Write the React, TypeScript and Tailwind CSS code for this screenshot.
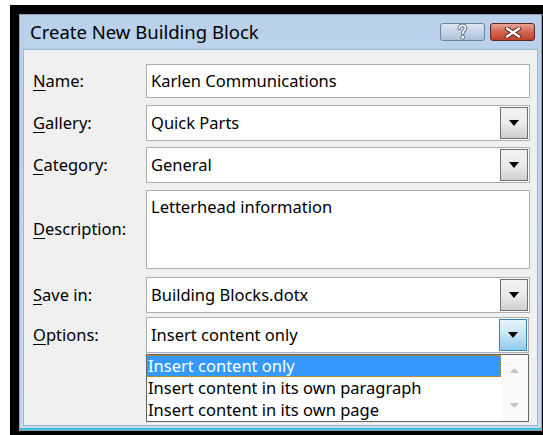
import React from 'react'

const font = "font-['Noto_Sans',sans-serif]"

function Key({ label, k }: { label: string; k: number }) {
  return (
    <span>
      {label.slice(0, k)}
      <span className="underline underline-offset-[3px]">{label[k]}</span>
      {label.slice(k + 1)}
    </span>
  )
}

function Arrow({ active }: { active?: boolean }) {
  return (
    <div
      className={`flex w-[28px] shrink-0 items-center justify-center border ${
        active
          ? 'border-[#3c7fb1] bg-gradient-to-b from-[#e5f4fc] via-[#c4e5f6] to-[#8ecbee]'
          : 'border-[#707070] bg-gradient-to-b from-[#f2f2f2] via-[#ebebeb] to-[#cfcfcf]'
      }`}
    >
      <svg width="10" height="6" viewBox="0 0 10 6">
        <path d="M0 0h10L5 6z" fill="#000" />
      </svg>
    </div>
  )
}

function TextBox({ value }: { value: string }) {
  return (
    <div className="flex h-[34px] items-center border border-[#abadb3] bg-white px-[4px] text-[16.5px] text-black">
      {value}
    </div>
  )
}

function Combo({ value, active, w = '' }: { value: string; active?: boolean; w?: string }) {
  return (
    <div className={`flex h-[36px] border border-[#abadb3] bg-white p-[1px] text-[16.5px] text-black ${w}`}>
      <div className="flex flex-1 items-center px-[3px]">{value}</div>
      <Arrow active={active} />
    </div>
  )
}

function Row({ label, k, children, className = '' }: { label: string; k: number; children: React.ReactNode; className?: string }) {
  return (
    <div className={`grid grid-cols-[113px_384px] items-center ${className}`}>
      <div className="text-[16.5px] text-black">
        <Key label={label} k={k} />
      </div>
      {children}
    </div>
  )
}

function CaptionButtons() {
  const q = 'M2.2 4.6C2.2 2.2 3.6 1.4 5.4 1.4S8.6 2.3 8.6 4.2C8.6 6.2 5.7 6.6 5.7 9.3'
  return (
    <div className="flex items-center gap-[5px]">
      <div className="flex h-[18px] w-[45px] items-center justify-center rounded-[3px] border border-[#6f8299] bg-gradient-to-b from-[#dfe8f2] via-[#c5d5e7] to-[#a9bfd8]">
        <svg width="11" height="16" viewBox="0 0 11 16">
          <path d={q} fill="none" stroke="#56687c" strokeWidth="3.6" strokeLinecap="round" />
          <path d={q} fill="none" stroke="#fff" strokeWidth="1.8" strokeLinecap="round" />
          <circle cx="5.7" cy="13.3" r="1.9" fill="#fff" stroke="#56687c" strokeWidth="0.9" />
        </svg>
      </div>
      <div className="flex h-[18px] w-[45px] items-center justify-center rounded-[3px] border border-[#5a2620] bg-gradient-to-b from-[#e7a696] via-[#d2644f] to-[#c0402b]">
        <svg width="18" height="11" viewBox="0 0 18 11">
          <path d="M3 1.5l12 8M15 1.5l-12 8" stroke="#5b2b26" strokeWidth="4.4" strokeLinecap="round" />
          <path d="M3 1.5l12 8M15 1.5l-12 8" stroke="#fff" strokeWidth="2.4" strokeLinecap="round" />
        </svg>
      </div>
    </div>
  )
}

function OptionList() {
  const items = ['Insert content only', 'Insert content in its own paragraph', 'Insert content in its own page']
  return (
    <div className="absolute left-[122px] top-[304px] flex h-[68px] w-[383px] border border-[#646464] bg-white text-[16.5px] text-black">
      <div className="flex-1">
        {items.map((item, i) => (
          <div
            key={item}
            className={`flex h-[22px] items-center px-[1px] leading-none ${
              i === 0 ? 'bg-[#3399ff] text-white outline-1 -outline-offset-1 outline-dotted outline-[#c9883a]' : ''
            }`}
          >
            {item}
          </div>
        ))}
      </div>
      <div className="flex w-[27px] flex-col items-center justify-between bg-[#fafafa] py-[13px]">
        <svg width="9" height="5" viewBox="0 0 9 5">
          <path d="M0 5h9L4.5 0z" fill="#c4c4c4" />
        </svg>
        <svg width="9" height="5" viewBox="0 0 9 5">
          <path d="M0 0h9L4.5 5z" fill="#c4c4c4" />
        </svg>
      </div>
    </div>
  )
}

export default function App() {
  return (
    <div className={`h-[435px] w-[543px] overflow-hidden bg-white pl-[10px] pt-[5px] ${font}`}>
      <div className="h-[430px] w-[533px] bg-black pl-[9px] pt-[9px]">
        <div className="flex h-[417px] w-[523px] flex-col border border-[#8f9fb1] bg-gradient-to-b from-[#b9d1ea] to-[#c5d9ee] shadow-[inset_0_-2px_0_#3ec0d8]">
          <div className="flex h-[34px] shrink-0 items-center justify-between pl-[10px] pr-[6px]">
            <span className="text-[18.5px] text-black">Create New Building Block</span>
            <CaptionButtons />
          </div>
          <div className="relative mx-[3px] mb-[4px] flex-1 border border-[#9fb6cf] bg-[#f0f0f0] pl-[9px] pt-[14px]">
            <Row label="Name:" k={0}>
              <TextBox value="Karlen Communications" />
            </Row>
            <Row label="Gallery:" k={0} className="mt-[7px]">
              <Combo value="Quick Parts" />
            </Row>
            <Row label="Category:" k={0} className="mt-[6px]">
              <Combo value="General" />
            </Row>
            <Row label="Description:" k={0} className="mt-[7px]">
              <div className="h-[79px] border border-[#abadb3] bg-white px-[4px] pt-[4px] text-[16.5px] text-black">
                Letterhead information
              </div>
            </Row>
            <Row label="Save in:" k={0} className="mt-[8px]">
              <Combo value="Building Blocks.dotx" />
            </Row>
            <Row label="Options:" k={0} className="mt-[4px]">
              <Combo value="Insert content only" active w="w-[383px]" />
            </Row>
            <OptionList />
          </div>
        </div>
      </div>
    </div>
  )
}
